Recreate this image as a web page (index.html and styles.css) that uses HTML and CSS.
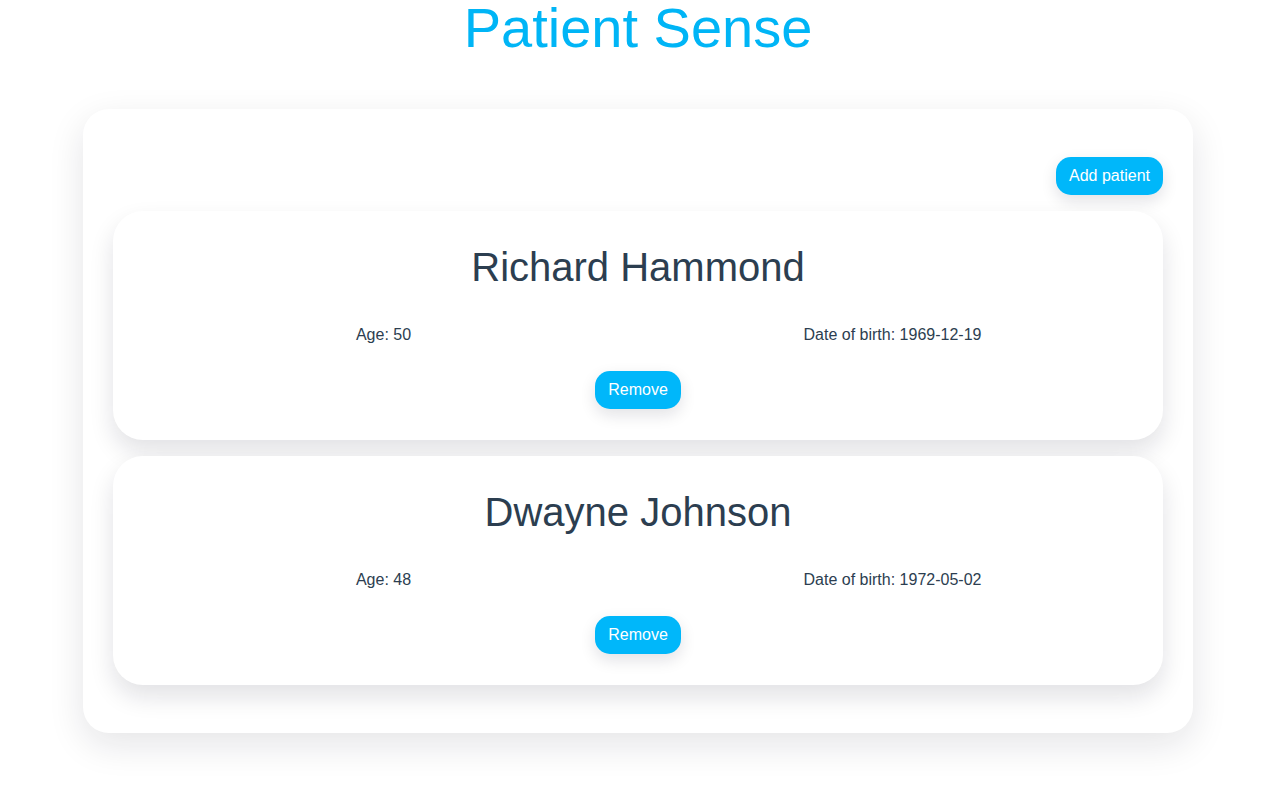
FILE: index.html
```html
<!DOCTYPE html>
<html lang="en">
<head>
<meta charset="utf-8">
<title>Patient Sense</title>
<link rel="stylesheet" href="styles.css">
</head>
<body>
<div class="app">
  <h1 class="title">Patient Sense</h1>
  <main class="panel">
    <div class="toolbar">
      <button class="btn">Add patient</button>
    </div>
    <section class="patient">
      <h2 class="patient-name">Richard Hammond</h2>
      <div class="patient-info">
        <div class="info-col">Age: 50</div>
        <div class="info-col">Date of birth: 1969-12-19</div>
      </div>
      <div class="patient-actions">
        <button class="btn">Remove</button>
      </div>
    </section>
    <section class="patient">
      <h2 class="patient-name">Dwayne Johnson</h2>
      <div class="patient-info">
        <div class="info-col">Age: 48</div>
        <div class="info-col">Date of birth: 1972-05-02</div>
      </div>
      <div class="patient-actions">
        <button class="btn">Remove</button>
      </div>
    </section>
  </main>
</div>
</body>
</html>
```
FILE: styles.css
```css
html, body {
  margin: 0;
  padding: 0;
  background: #ffffff;
}

body {
  font-family: "Liberation Sans", Arial, Helvetica, sans-serif;
  color: #2c3e50;
  padding-right: 7px;
}

.app {
  display: flex;
  flex-direction: column;
  align-items: center;
  padding-bottom: 64px;
}

.title {
  margin: 0;
  font-size: 56px;
  font-weight: 400;
  line-height: 56px;
  color: #00b5f6;
  text-align: center;
}

.panel {
  box-sizing: border-box;
  width: 1110px;
  margin-top: 53px;
  padding: 48px 30px;
  background: #ffffff;
  border-radius: 26px;
  box-shadow: 0 12px 36px rgba(20, 20, 40, 0.11);
  display: flex;
  flex-direction: column;
  gap: 16px;
}

.toolbar {
  display: flex;
  justify-content: flex-end;
}

.btn {
  font-family: "Liberation Sans", Arial, Helvetica, sans-serif;
  font-size: 16px;
  line-height: 18px;
  color: #ffffff;
  background: #00b7fa;
  border: none;
  border-radius: 15px;
  padding: 10px 13px;
  box-shadow: 0 6px 16px rgba(20, 20, 40, 0.12);
  cursor: pointer;
}

.patient {
  padding: 33px 16px 31px;
  background: #ffffff;
  border-radius: 30px;
  box-shadow: 0 12px 24px rgba(20, 20, 40, 0.12);
  text-align: center;
}

.patient-name {
  margin: 0;
  font-size: 40px;
  font-weight: 400;
  line-height: 46px;
}

.patient-info {
  margin-top: 36px;
  display: grid;
  grid-template-columns: 1fr 1fr;
  font-size: 16px;
  line-height: 18px;
}

.patient-actions {
  margin-top: 27px;
}
```
